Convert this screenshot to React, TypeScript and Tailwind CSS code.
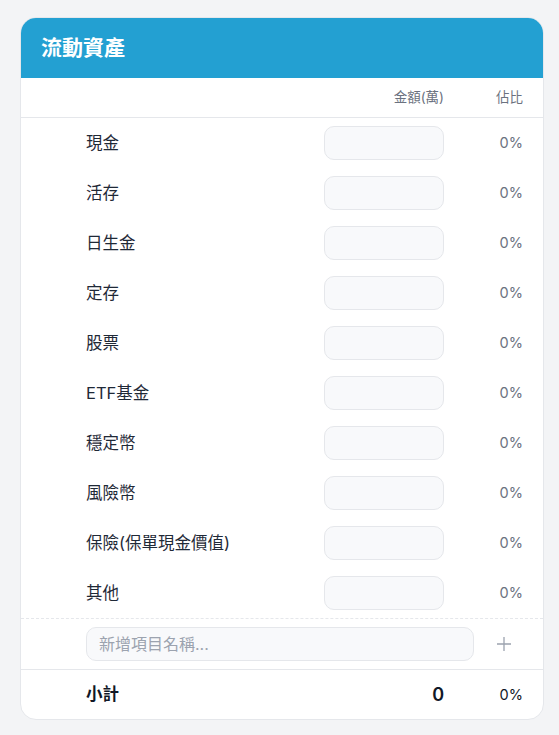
const items = ['現金', '活存', '日生金', '定存', '股票', 'ETF基金', '穩定幣', '風險幣', '保險(保單現金價值)', '其他']

export default function App() {
  return (
    <div
      className="min-h-screen bg-[#f3f4f6] px-5 pt-[17px] pb-4"
      style={{ fontFamily: 'Inter, "Noto Sans CJK TC", sans-serif' }}
    >
      <div className="w-[524px] overflow-hidden rounded-2xl border border-[#e5e7eb] bg-white">
        {/* Header */}
        <div className="flex h-[60px] items-center bg-[#23a0d2] px-5">
          <h2 className="text-[21px] font-bold text-white">流動資產</h2>
        </div>

        {/* Column titles */}
        <div className="flex h-[40px] items-center border-b border-[#e5e7eb] pr-5 text-[13.5px] text-[#6b7280]">
          <div className="flex-1" />
          <div className="w-[120px] text-right">金額(萬)</div>
          <div className="w-[79px] text-right">佔比</div>
        </div>

        {/* Items */}
        <div>
          {items.map((name) => (
            <div key={name} className="flex h-[50px] items-center pl-[65px] pr-5">
              <div className="flex-1 pt-px text-[16.5px] text-[#1f2937]">{name}</div>
              <input className="h-[34px] w-[120px] rounded-[10px] border border-[#e5e7eb] bg-[#f8f9fb] px-3 text-right text-sm outline-none" />
              <div className="w-[79px] text-right text-[14.5px] text-[#6b7280]">0%</div>
            </div>
          ))}
        </div>

        {/* Add row */}
        <div className="flex h-[51px] items-center border-t border-dashed border-[#e5e7eb] pl-[65px] pr-5">
          <input
            placeholder="新增項目名稱..."
            className="h-[34px] flex-1 rounded-[10px] border border-[#e5e7eb] bg-[#f8f9fb] px-3 text-[16px] text-[#1f2937] outline-none placeholder:text-[#9ca3af]"
          />
          <div className="flex w-[49px] items-center justify-end pr-[12px]">
            <svg width="14" height="14" viewBox="0 0 14 14" stroke="#9ca3af" strokeWidth="1.3">
              <path d="M7 0v14M0 7h14" />
            </svg>
          </div>
        </div>

        {/* Subtotal */}
        <div className="flex h-[50px] items-center border-t border-[#e5e7eb] pl-[65px] pr-5">
          <div className="flex-1 text-[16.5px] font-bold text-[#111827]">小計</div>
          <div className="w-[120px] text-right text-[18px] font-semibold text-[#111827]">0</div>
          <div className="w-[79px] text-right text-[14.5px] text-[#111827]">0%</div>
        </div>
      </div>
    </div>
  )
}
